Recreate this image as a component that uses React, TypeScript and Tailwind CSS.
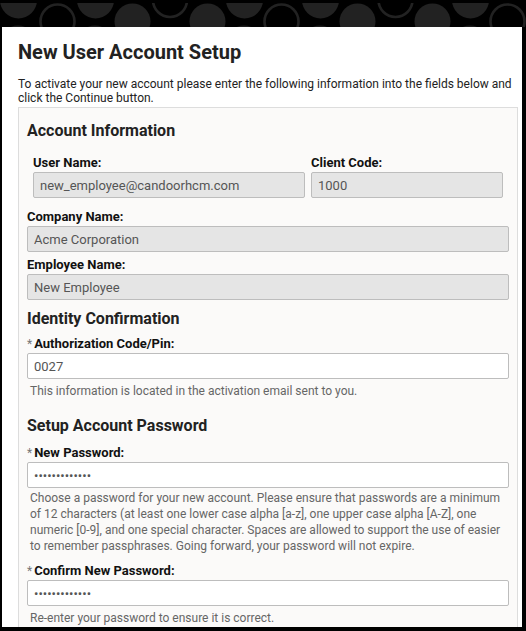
import React from "react";

const ROW_TOP = [
  { x: 18.5, kind: "semi" },
  { x: 57.5, kind: "ring" },
  { x: 95.5, kind: "semi" },
  { x: 132.5, kind: "circle" },
  { x: 170, kind: "arc" },
  { x: 207.5, kind: "circle" },
  { x: 244.5, kind: "semi" },
  { x: 281.5, kind: "ring" },
  { x: 320.5, kind: "semi" },
  { x: 357.5, kind: "circle" },
  { x: 395.5, kind: "arc" },
  { x: 432.5, kind: "circle" },
  { x: 470.5, kind: "semi" },
  { x: 507.5, kind: "ring" },
];

function Backdrop() {
  return (
    <svg width="526" height="27" viewBox="0 0 526 27" className="block">
      <rect width="526" height="27" fill="#000" />
      {ROW_TOP.map((s, i) => {
        if (s.kind === "semi") return <circle key={i} cx={s.x} cy={0} r={18.5} fill="#222" />;
        if (s.kind === "circle") return <circle key={i} cx={s.x} cy={21.5} r={18} fill="#222" />;
        if (s.kind === "ring")
          return <circle key={i} cx={s.x} cy={21.5} r={17} fill="none" stroke="#222" strokeWidth={2.6} />;
        return <circle key={i} cx={s.x} cy={0} r={17} fill="none" stroke="#222" strokeWidth={2.6} />;
      })}
      {[18, 95, 244, 320, 470].map((x) => (
        <circle key={x} cx={x} cy={44} r={18.5} fill="#1c1c1c" />
      ))}
      <rect width="526" height="3" fill="#000" />
    </svg>
  );
}

function Label({ text, required }: { text: string; required?: boolean }) {
  return (
    <div className="h-[14px] text-[13px] leading-[14px] font-bold text-[#111]">
      {required && <span className="mr-[2px] text-[12px] font-normal text-[#777]">*</span>}
      {text}
    </div>
  );
}

function Field({
  value,
  readOnly,
  password,
}: {
  value: string;
  readOnly?: boolean;
  password?: boolean;
}) {
  return (
    <input
      type={password ? "password" : "text"}
      value={value}
      readOnly
      className={
        "mt-[2px] block h-[26px] w-full rounded-[2px] border border-[#bdbdbd] px-[6px] text-[13px] text-[#555] outline-none " +
        (readOnly ? "bg-[#e5e5e5]" : "bg-white")
      }
    />
  );
}

function Heading({ children, className }: { children: React.ReactNode; className: string }) {
  return <h2 className={"h-[20px] text-[16px] leading-[20px] font-bold text-[#222] " + className}>{children}</h2>;
}

function Help({ children, className }: { children: React.ReactNode; className: string }) {
  return <p className={"pl-[3px] text-[12px] text-[#666] " + className}>{children}</p>;
}

export default function App() {
  return (
    <div className="h-[631px] w-[526px] overflow-hidden bg-black font-['Roboto',sans-serif]">
      <Backdrop />
      <div className="ml-[2px] h-[600px] w-[520px] overflow-hidden bg-white pl-[16px] pt-[13px]">
        <h1 className="h-[24px] text-[20px] leading-[24px] font-bold text-[#222]">New User Account Setup</h1>
        <p className="mt-[13px] text-[12px] leading-[14px] text-[#222]">
          To activate your new account please enter the following information into the fields below and click the
          Continue button.
        </p>

        <div className="mt-[2px] w-[500px] border border-[#ddd] bg-[#fbfaf9] px-[8px] pt-[13px] pb-[40px]">
          <Heading className="">Account Information</Heading>

          <div className="mt-[15px] grid grid-cols-[272px_192px] gap-x-[6px] px-[6px]">
            <div>
              <Label text="User Name:" />
              <Field value="new_employee@candoorhcm.com" readOnly />
            </div>
            <div>
              <Label text="Client Code:" />
              <Field value="1000" readOnly />
            </div>
          </div>

          <div className="mt-[12px]">
            <Label text="Company Name:" />
            <Field value="Acme Corporation" readOnly />
          </div>
          <div className="mt-[6px]">
            <Label text="Employee Name:" />
            <Field value="New Employee" readOnly />
          </div>

          <Heading className="mt-[9px]">Identity Confirmation</Heading>
          <div className="mt-[8px]">
            <Label text="Authorization Code/Pin:" required />
            <Field value="0027" />
          </div>
          <Help className="mt-[5px] leading-[14px]">This information is located in the activation email sent to you.</Help>

          <Heading className="mt-[18px]">Setup Account Password</Heading>
          <div className="mt-[10px]">
            <Label text="New Password:" required />
            <Field value="Password12345" password />
          </div>
          <Help className="mt-[2px] leading-[16px]">
            Choose a password for your new account. Please ensure that passwords are a minimum of 12 characters (at
            least one lower case alpha [a-z], one upper case alpha [A-Z], one numeric [0-9], and one special
            character. Spaces are allowed to support the use of easier to remember passphrases. Going forward, your
            password will not expire.
          </Help>

          <div className="mt-[10px]">
            <Label text="Confirm New Password:" required />
            <Field value="Password12345" password />
          </div>
          <Help className="mt-[5px] leading-[14px]">Re-enter your password to ensure it is correct.</Help>
        </div>
      </div>
    </div>
  );
}
